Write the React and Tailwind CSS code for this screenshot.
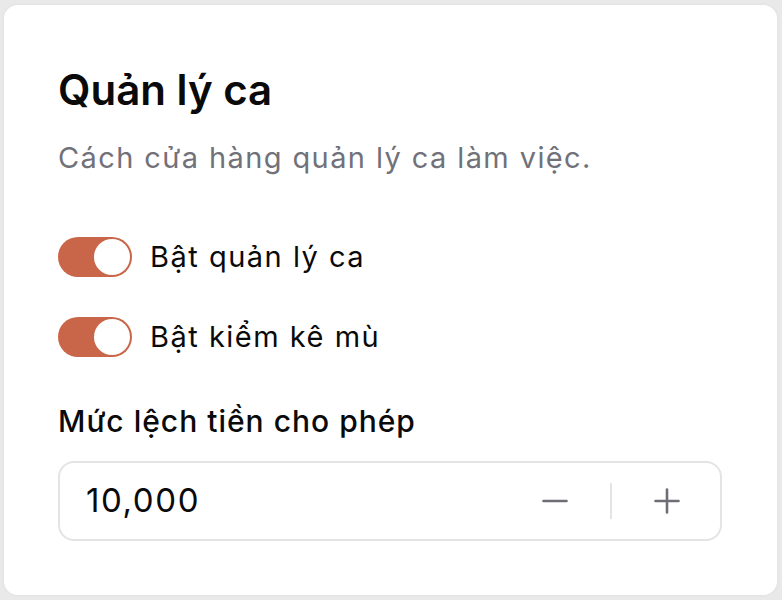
import { useState } from "react";

const Toggle = ({ on, onChange }) => (
  <button
    type="button"
    onClick={() => onChange(!on)}
    className={`flex h-[40px] w-[74px] shrink-0 items-center rounded-full p-[2px] ${on ? "bg-[#c9664a] justify-end" : "bg-[#e4e4e7] justify-start"}`}
  >
    <span className="block h-[36px] w-[36px] rounded-full bg-white" />
  </button>
);

const App = () => {
  const [shift, setShift] = useState(true);
  const [blind, setBlind] = useState(true);
  const [amount, setAmount] = useState(10000);

  return (
    <div className="h-[600px] w-[782px] bg-[#e9e9e9] pt-[3px] pl-[2px] pr-[3px] pb-[3px] font-['Inter','Noto_Sans',sans-serif]">
      <div className="h-full rounded-[16px] border-2 border-[#e6e6e6] bg-white pl-[54px] pr-[55px] pt-[60px]">
        <h2 className="text-[42px] leading-[50px] font-semibold text-[#0a0a0a]">Quản lý ca</h2>
        <p className="mt-[23px] text-[29px] leading-[40px] tracking-[1.4px] text-[#71717a]">Cách cửa hàng quản lý ca làm việc.</p>

        <div className="mt-[59px] flex flex-col gap-[40px]">
          <label className="flex items-center gap-[18px]">
            <Toggle on={shift} onChange={setShift} />
            <span className="text-[29px] leading-[40px] tracking-[1.5px] text-[#0a0a0a]">Bật quản lý ca</span>
          </label>
          <label className="flex items-center gap-[18px]">
            <Toggle on={blind} onChange={setBlind} />
            <span className="text-[29px] leading-[40px] tracking-[1.5px] text-[#0a0a0a]">Bật kiểm kê mù</span>
          </label>
        </div>

        <p className="mt-[44px] text-[30px] leading-[40px] tracking-[1px] font-medium text-[#0a0a0a]">Mức lệch tiền cho phép</p>

        <div className="mt-[20px] flex h-[80px] items-center rounded-[16px] border-2 border-[#e4e4e7] pl-[26px] pr-[31px]">
          <span className="flex-1 text-[33px] tracking-[1.6px] text-[#0a0a0a]">{amount.toLocaleString("en-US")}</span>
          <button type="button" onClick={() => setAmount(Math.max(0, amount - 1000))} className="flex h-[44px] w-[44px] items-center justify-center text-[#6e6e76]">
            <svg width="26" height="26" viewBox="0 0 26 26" fill="none" stroke="currentColor" strokeWidth="2.6" strokeLinecap="round"><path d="M1.5 13h23" /></svg>
          </button>
          <span className="mx-[33px] h-[36px] w-[2px] bg-[#e4e4e7]" />
          <button type="button" onClick={() => setAmount(amount + 1000)} className="flex h-[44px] w-[44px] items-center justify-center text-[#6e6e76]">
            <svg width="26" height="26" viewBox="0 0 26 26" fill="none" stroke="currentColor" strokeWidth="2.6" strokeLinecap="round"><path d="M1.5 13h23M13 1.5v23" /></svg>
          </button>
        </div>
      </div>
    </div>
  );
};

export default App;
